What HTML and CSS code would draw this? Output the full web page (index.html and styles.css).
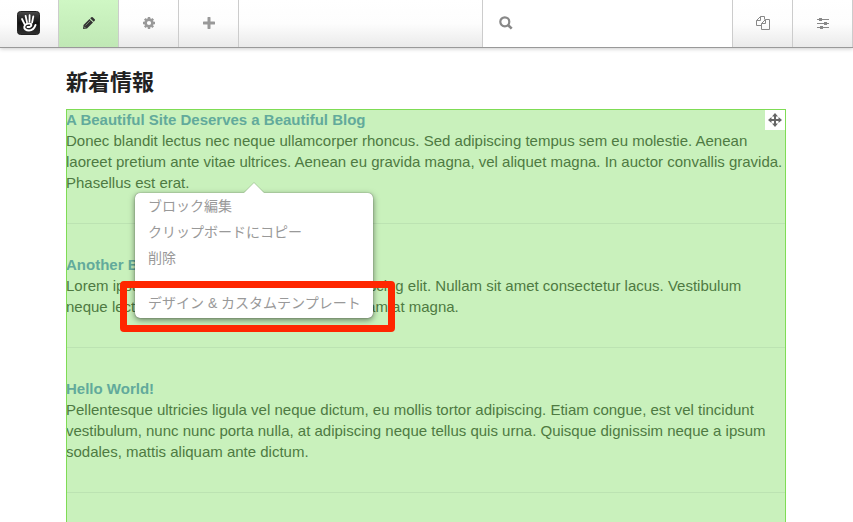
FILE: index.html
```
<!DOCTYPE html>
<html lang="ja">
<head>
    <meta charset="UTF-8">
    <meta name="viewport" content="width=device-width, initial-scale=1.0">
    <title>新着情報</title>
    <link rel="stylesheet" href="styles.css">
</head>
<body>
    <header class="toolbar">
        <a href="#" class="tool logo" aria-label="Dashboard">
            <svg width="24" height="24" viewBox="0 0 24 24">
                <defs>
                    <linearGradient id="logo-bg" x1="0" y1="0" x2="0" y2="1">
                        <stop offset="0" stop-color="#4a4a4a"/>
                        <stop offset="0.5" stop-color="#111"/>
                        <stop offset="1" stop-color="#303030"/>
                    </linearGradient>
                </defs>
                <rect x="0.5" y="0.5" width="22" height="23" rx="3" fill="url(#logo-bg)" stroke="#222"/>
                <g fill="none" stroke="#fff" stroke-linecap="round">
                    <path d="M5 8l2.500 5M8.600 4.800l1.400 6.500M12.600 4.200l-.1 6.500M16.300 5.500l-1.200 6" stroke-width="1.800"/>
                    <path d="M18.500 14c-1.200 3.500-3.400 5.500-6.500 5.500-3 0-5-1.700-4.700-3.700.4-2.400 3.200-3.600 5.600-3.300 2 .3 1.800 2.500.2 3.200-1 .4-2 .5-2.600.3" stroke-width="2"/>
                </g>
            </svg>
        </a>
        <button type="button" class="tool active" aria-label="Edit">
            <svg width="12" height="12" viewBox="0 0 12 12" fill="#333">
                <path d="M.5 8L6.500 2l3.500 3.500-6 6L0 12z"/>
                <path d="M7.200 1.300L8.300.3q.7-.6 1.400 0l2 2q.6.7 0 1.400l-1 1.100z"/>
                <path d="M2.500 8.500l5-5" stroke="#8fa986" stroke-width=".7"/>
                <path d="M1.200 9.800l1 1" stroke="#c5eebb" stroke-width=".8"/>
            </svg>
        </button>
        <button type="button" class="tool" aria-label="Page settings">
            <svg width="12" height="12" viewBox="0 0 12 12">
                <circle cx="6" cy="6" r="3.400" fill="none" stroke="#999" stroke-width="2.600"/>
                <path d="M6 0v2M6 10v2M0 6h2M10 6h2M1.800 1.800l1.400 1.400M8.800 8.800l1.400 1.400M1.800 10.200l1.400-1.400M8.800 3.200l1.400-1.400" stroke="#999" stroke-width="2.400"/>
            </svg>
        </button>
        <button type="button" class="tool" aria-label="Add">
            <svg width="12" height="12" viewBox="0 0 12 12">
                <path d="M6 1v10M1 6h10" stroke="#999" stroke-width="3" stroke-linecap="round"/>
            </svg>
        </button>
        <label class="search">
            <svg width="14" height="14" viewBox="0 0 14 14" fill="none" stroke="#888">
                <circle cx="5.800" cy="5.800" r="4.500" stroke-width="2.200"/>
                <path d="M9 9l3.700 3.700" stroke-width="2.600"/>
            </svg>
            <input type="search" class="search-input" aria-label="Search">
        </label>
        <button type="button" class="tool" aria-label="Pages">
            <svg width="14" height="14" viewBox="0 0 14 14" fill="none" stroke="#888">
                <path d="M5.500 9.500h-5v-5l4-4h4v3M4.500.5v4h-4"/>
                <path d="M5.500 7.500l4-4h4v10h-8zM9.500 3.500v4h-4"/>
            </svg>
        </button>
        <button type="button" class="tool" aria-label="Sitewide settings">
            <svg width="12" height="12" viewBox="0 0 12 12">
                <path d="M0 2.500h12M0 6.500h12M0 10.500h12" stroke="#888"/>
                <path d="M2 1h3v3H2zM7 5h3v3H7zM3 9h3v3H3z" fill="#888"/>
            </svg>
        </button>
    </header>

    <main class="page">
        <h1 class="page-title">新着情報</h1>

        <div class="block">
            <button type="button" class="move-handle" aria-label="Move block">
                <svg width="14" height="14" viewBox="0 0 14 14">
                    <path d="M7 2v10M2 7h10" stroke="#666" stroke-width="2"/>
                    <path d="M7 0l3 3.500H4zM7 14l3-3.500H4zM0 7l3.500-3v6zM14 7l-3.500-3v6z" fill="#666"/>
                </svg>
            </button>

            <article class="entry">
                <h2><a href="#">A Beautiful Site Deserves a Beautiful Blog</a></h2>
                <p>Donec blandit lectus nec neque ullamcorper rhoncus. Sed adipiscing tempus sem eu molestie. Aenean laoreet pretium ante vitae ultrices. Aenean eu gravida magna, vel aliquet magna. In auctor convallis gravida. Phasellus est erat.</p>
            </article>
            <article class="entry">
                <h2><a href="#">Another Blog Post</a></h2>
                <p>Lorem ipsum dolor sit amet, consectetur adipiscing elit. Nullam sit amet consectetur lacus. Vestibulum neque lectus, porta et hendrerit eget ac, aliquam at magna.</p>
            </article>
            <article class="entry">
                <h2><a href="#">Hello World!</a></h2>
                <p>Pellentesque ultricies ligula vel neque dictum, eu mollis tortor adipiscing. Etiam congue, est vel tincidunt vestibulum, nunc nunc porta nulla, at adipiscing neque tellus quis urna. Quisque dignissim neque a ipsum sodales, mattis aliquam ante dictum.</p>
            </article>

            <nav class="block-menu">
                <a href="#">ブロック編集</a>
                <a href="#">クリップボードにコピー</a>
                <a href="#">削除</a>
                <hr>
                <a href="#">デザイン &amp; カスタムテンプレート</a>
            </nav>
            <div class="callout"></div>
        </div>
    </main>
</body>
</html>
```
FILE: styles.css
```
* {
    box-sizing: border-box;
}
body {
    display: flex;
    flex-direction: column;
    height: 100vh;
    margin: 0;
    overflow: hidden;
    background: #fff;
    color: #222;
    font-family: "Liberation Sans", "Noto Sans CJK JP", sans-serif;
    font-size: 15px;
    line-height: 21px;
}

/* toolbar */
.toolbar {
    display: flex;
    flex: none;
    height: 48px;
    border-bottom: 1px solid #999;
    background: linear-gradient(#fff 0%, #fdfdfd 50%, #eaeaea 100%);
    box-shadow: 0 1px 4px rgba(0, 0, 0, 0.2);
}
.tool {
    display: flex;
    align-items: center;
    justify-content: center;
    width: 60px;
    padding: 0 0 2px;
    border: 0;
    border-right: 1px solid #ccc;
    background: none;
    cursor: pointer;
}
.logo {
    width: 59px;
}
.active {
    background: linear-gradient(#cff7c4, #c0e8b5);
}
.search {
    display: flex;
    align-items: center;
    gap: 8px;
    width: 251px;
    margin-left: auto;
    padding: 0 16px 2px;
    border: solid #ccc;
    border-width: 0 1px;
    background: #fff;
}
.search-input {
    flex: 1;
    min-width: 0;
    border: 0;
    outline: 0;
    background: none;
    font: inherit;
}

/* page */
.page {
    display: flex;
    flex: 1;
    flex-direction: column;
    width: 100%;
    max-width: 853px;
    margin: 0 auto;
    padding: 20px 67px 0 66px;
}
.page-title {
    margin: 0 0 11px;
    font-size: 22px;
    line-height: 30px;
}
.block {
    position: relative;
    flex: 1;
    background: #c9f1bc;
    outline: 1px solid #7fdc55;
    outline-offset: -1px;
}
.entry {
    margin-bottom: 30px;
    padding-bottom: 30px;
    border-bottom: 1px solid #bce3b2;
}
.entry h2 {
    margin: 0;
    font-size: 15px;
}
.entry a {
    color: #62aa9b;
    text-decoration: none;
}
.entry p {
    margin: 0;
    color: #4e7a42;
}
.move-handle {
    position: absolute;
    top: 1px;
    right: 1px;
    display: flex;
    align-items: center;
    justify-content: center;
    width: 20px;
    height: 20px;
    padding: 0;
    border: 0;
    background: #fff;
    cursor: move;
}

/* popover menu */
.block-menu {
    position: absolute;
    top: 84px;
    left: 69px;
    width: 238px;
    padding-bottom: 2px;
    border-radius: 5px;
    background: #fff;
    box-shadow: 0 0 1px rgba(0, 0, 0, 0.6), 0 2px 6px rgba(0, 0, 0, 0.5);
}
.block-menu::before {
    content: "";
    position: absolute;
    top: -10px;
    left: 109px;
    border: 10px solid transparent;
    border-top: 0;
    border-bottom-color: #fff;
    filter: drop-shadow(0 -1px 0 rgba(0, 0, 0, 0.15));
}
.block-menu a {
    display: block;
    padding: 0 13px;
    color: #999;
    font-size: 14px;
    line-height: 26px;
    text-decoration: none;
    white-space: nowrap;
}
.block-menu hr {
    margin: 11px 0 7px;
    border: 0;
    border-top: 1px solid #e5e5e5;
}
.callout {
    position: absolute;
    top: 172px;
    left: 54px;
    width: 275px;
    height: 51px;
    border: 7px solid #ff2600;
    border-radius: 4px;
    pointer-events: none;
}
```
